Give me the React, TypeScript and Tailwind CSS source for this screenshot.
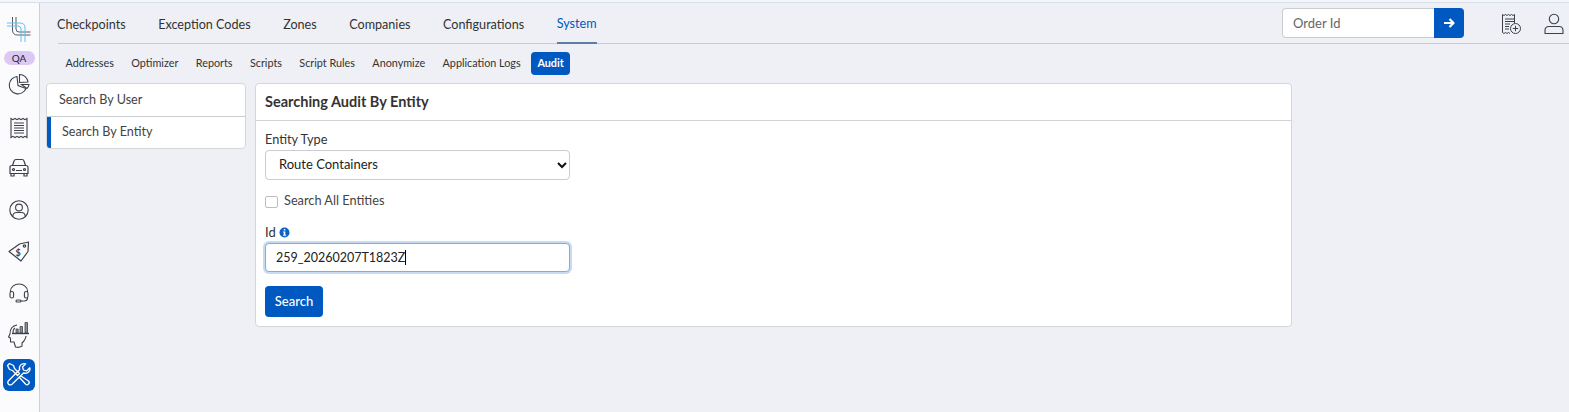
import React from "react";

const stroke = "#3c4149";

function Logo() {
  return (
    <svg width="24" height="25" viewBox="0 0 24 25" fill="none" strokeWidth="1">
      <path d="M5.500 0v13q0 5 5 5h13" stroke="#555a63" />
      <path d="M9 0v12q0 3 3 3h11.500" stroke="#555a63" />
      <path d="M0 6h13q5 0 5 5v14" stroke="#62c2ee" />
      <path d="M0 9h11q3 0 3 3v13" stroke="#62c2ee" />
    </svg>
  );
}
function Chart() {
  return (
    <svg width="22" height="22" viewBox="0 0 22 22" fill="none" stroke={stroke} strokeWidth="1.100">
      <path d="M9 3.500A8.700 8.700 0 1 0 18 15.500L10 12.500z" />
      <path d="M11.500 1.500a8.500 8.500 0 0 1 8.500 7.500l-8.500 .5z" />
      <path d="M13.500 11.500h7.500a8 8 0 0 1-2 4z" />
    </svg>
  );
}
function Receipt() {
  return (
    <svg width="20" height="22" viewBox="0 0 20 22" fill="none" stroke={stroke} strokeWidth="1.100">
      <path d="M2 1.500l2 1.200 2-1.200 2 1.200 2-1.200 2 1.200 2-1.200 2 1.200 2-1.200v19l-2-1.200-2 1.200-2-1.200-2 1.200-2-1.200-2 1.200-2-1.200-2 1.200z" />
      <path d="M5 6h10M5 8.500h10M5 11h10M5 13.500h10M5 16h10" />
    </svg>
  );
}
function Car() {
  return (
    <svg width="22" height="20" viewBox="0 0 22 20" fill="none" stroke={stroke} strokeWidth="1.200">
      <path d="M4.500 7.500l1.500-4.500q.4-1.500 2-1.500h6q1.600 0 2 1.500l1.500 4.500" />
      <path d="M2 9.500q0-2 2-2h14q2 0 2 2v6h-18z" />
      <path d="M3 15.500v2.500h3v-2.500M16 15.500v2.500h3v-2.500M8 12.500h6" />
      <circle cx="5.500" cy="11.500" r="1" />
      <circle cx="16.500" cy="11.500" r="1" />
    </svg>
  );
}
function UserCircle() {
  return (
    <svg width="20" height="20" viewBox="0 0 20 20" fill="none" stroke={stroke} strokeWidth="1.100">
      <circle cx="10" cy="10" r="9.200" />
      <circle cx="10" cy="7.500" r="3.400" />
      <path d="M3.800 16.500q0-4 4-4h4.400q4 0 4 4" />
    </svg>
  );
}
function Tag() {
  return (
    <svg width="22" height="22" viewBox="0 0 22 22" fill="none" stroke={stroke} strokeWidth="1.200">
      <path d="M1 11.500L11.500 4l9-2-.5 9.500-7 9.500z" strokeLinejoin="round" />
      <circle cx="16.500" cy="6" r="1.200" />
      <text x="7.500" y="15.500" fontSize="9" fontWeight="700" fill={stroke} stroke="none" fontFamily="Lato">$</text>
    </svg>
  );
}
function Headset() {
  return (
    <svg width="20" height="20" viewBox="0 0 20 20" fill="none" stroke={stroke} strokeWidth="1.100">
      <path d="M1.500 9V8a8.500 7 0 0 1 17 0v1" />
      <rect x="1" y="8.500" width="3.600" height="6.500" rx="1.800" />
      <rect x="15.400" y="8.500" width="3.600" height="6.500" rx="1.800" />
      <path d="M18.500 15q0 3-3.500 3h-3" />
      <rect x="7" y="17" width="5" height="2" rx="1" />
    </svg>
  );
}
function HeadChart() {
  return (
    <svg width="22" height="26" viewBox="0 0 22 26" fill="none" stroke={stroke} strokeWidth="1.100">
      <path d="M9 3Q2 4 2 12L.5 15l2 1v4H6l1.500 5q3.500 1 6.500-1v-3l2-2q2-3 2-5" strokeLinejoin="round" />
      <path d="M5 11q0-4 2-5" />
      <path d="M8 7h2.200v4H8zM12 4.500h2.500V11H12zM17 .5h2.500V11H17z" fill="#8a8e95" strokeWidth=".8" />
      <path d="M4 11.500h17" strokeWidth="1.400" />
    </svg>
  );
}
function Tools() {
  return (
    <svg width="26" height="26" viewBox="0 0 26 26" fill="none" stroke="#fff" strokeWidth="1.300" strokeLinejoin="round">
      <path d="M1.500 3.500L3.500 1.500l4 2 1 3 5 5-2 2-5-5-3-1z" />
      <path d="M15 14l-1.500 1.500 6 6.500q1.500 1.500 3 0t0-3z" />
      <path d="M23.800 5.800l-3.300 3.200-3-1-1-3L19.700 1.800q-4.200-1-5.700 2-1 1.700-.3 3.700L2.500 18.700q-1.500 2 0 3.500t3.500 0L17.500 11q2.500.7 4.500-.5 2.700-1.700 1.800-4.700z" />
    </svg>
  );
}
function ReceiptPlus() {
  return (
    <svg width="22" height="22" viewBox="0 0 22 22" fill="none" stroke={stroke} strokeWidth="1">
      <path d="M10 20.500l-1.500-1-1.500 1-1.500-1-1.500 1-1.500-1V1.500l1.500 1 1.500-1 1.500 1 1.500-1 1.500 1 1.500-1 1.500 1 1.500-1V10" />
      <path d="M5 6h10M5 8.500h10M5 11h5M5 13.500h4M5 16h4" />
      <circle cx="15.500" cy="15.500" r="5" />
      <path d="M15.500 12.800v5.400M12.800 15.500h5.400" />
    </svg>
  );
}
function UserOutline() {
  return (
    <svg width="20" height="22" viewBox="0 0 20 22" fill="none" stroke={stroke} strokeWidth="1.100">
      <circle cx="10" cy="6" r="4.700" />
      <path d="M1 20.500v-3q0-4 4-4h10q4 0 4 4v3z" strokeLinejoin="round" />
    </svg>
  );
}

const tabs = ["Checkpoints", "Exception Codes", "Zones", "Companies", "Configurations"];
const subs = ["Addresses", "Optimizer", "Reports", "Scripts", "Script Rules", "Anonymize", "Application Logs"];

export default function App() {
  return (
    <div className="flex h-[412px] w-[1569px] flex-col overflow-hidden bg-[#eef0f5] font-['Lato','Liberation_Sans',sans-serif] text-[#333]">
      <div className="h-[3px] shrink-0 border-b border-[#d8e0ea] bg-[#f4f6f9]" />
      <div className="flex min-h-0 flex-1">
        <aside className="flex w-[40px] shrink-0 flex-col items-center border-r border-[#cdd0d5] bg-[#fbfbfd] pr-[1px]">
          <div className="mt-[14px] flex h-[25px] items-center justify-center"><Logo /></div>
          <div className="mt-[9px] flex h-[14px] w-[31px] items-center justify-center rounded-full bg-[#dcc9f3] text-[10px] leading-none text-[#222]">QA</div>
          <div className="mt-[8px] flex h-[22px] items-center justify-center"><Chart /></div>
          <div className="mt-[22px] flex h-[22px] items-center justify-center"><Receipt /></div>
          <div className="mt-[19px] flex h-[20px] items-center justify-center"><Car /></div>
          <div className="mt-[22px] flex h-[20px] items-center justify-center"><UserCircle /></div>
          <div className="mt-[20px] flex h-[22px] items-center justify-center"><Tag /></div>
          <div className="mt-[21px] flex h-[20px] items-center justify-center"><Headset /></div>
          <div className="mt-[19px] flex h-[26px] items-center justify-center"><HeadChart /></div>
          <div className="mt-[11px] flex h-[32px] w-[32px] items-center justify-center rounded-[6px] bg-[#0059c1]"><Tools /></div>
        </aside>
        <main className="min-w-0 flex-1">
          <div className="ml-[18px] flex h-[41px] items-stretch border-b border-[#c9ccd1]">
            <nav className="-ml-[1px] flex items-stretch gap-[32.500px] text-[12.600px] text-[#333]">
              {tabs.map((t) => (
                <div key={t} className="flex items-center pt-[4px]">{t}</div>
              ))}
              <div className="-mb-[1px] flex items-center border-b-[2px] border-[#5f7ea6] pt-[4px] text-[#0059c1]">System</div>
            </nav>
            <div className="ml-auto flex items-start pt-[5px]">
              <div className="flex h-[30px] w-[182px]">
                <input readOnly placeholder="Order Id" className="h-full min-w-0 flex-1 rounded-l-[4px] border border-r-0 border-[#c9ccd1] bg-white pb-[1px] pl-[10px] text-[13px] text-[#333] outline-none placeholder:text-[#666]" />
                <div className="flex w-[30px] items-center justify-center rounded-r-[4px] bg-[#0059c1]">
                  <svg width="12" height="12" viewBox="0 0 12 12" fill="none" stroke="#fff" strokeWidth="2.200" strokeLinejoin="round">
                    <path d="M1 6h9M6.500 2l4 4-4 4" />
                  </svg>
                </div>
              </div>
              <div className="ml-[36px] mt-[5px]"><ReceiptPlus /></div>
              <div className="ml-[22px] mr-[5px] mt-[5px]"><UserOutline /></div>
            </div>
          </div>
          <div className="ml-[20px] flex h-[32px] items-center gap-[6.400px] pt-[6px] text-[10.800px] text-[#333]">
            {subs.map((s) => (
              <div key={s} className="flex h-[23px] items-center px-[5.500px]">{s}</div>
            ))}
            <div className="-ml-[1.500px] flex h-[23px] w-[39px] items-center justify-center rounded-[4px] bg-[#0059c1] font-bold text-white">Audit</div>
          </div>
          <div className="ml-[6px] mt-[7px] flex items-start gap-[9px]">
            <div className="w-[200px] overflow-hidden rounded-[4px] border border-[#d4d6da] bg-white text-[12.600px] text-[#444]">
              <div className="flex h-[33px] items-center border-b border-[#c9ccd1] pl-[12px]">Search By User</div>
              <div className="flex h-[31px] items-center border-l-[4px] border-[#0059c1] pl-[11px]">Search By Entity</div>
            </div>
            <div className="h-[244px] w-[1037px] rounded-[4px] border border-[#d4d6da] bg-white">
              <div className="flex h-[37px] items-center border-b border-[#d0d2d6] pl-[9px] text-[14.500px] font-bold text-[#333]">Searching Audit By Entity</div>
              <div className="pl-[9px] pt-[9px]">
                <label className="block h-[18px] text-[12.700px] leading-[18px] text-[#333]">Entity Type</label>
                <div className="relative mt-[2px] h-[30px] w-[305px]">
                  <select className="h-full w-full appearance-none rounded-[4px] border border-[#c9ccd1] bg-white pl-[13px] text-[13px] text-[#222] outline-none">
                    <option>Route Containers</option>
                  </select>
                  <svg className="pointer-events-none absolute right-[3px] top-[11px]" width="10" height="8" viewBox="0 0 10 8" fill="none" stroke="#111" strokeWidth="2">
                    <path d="M1 2l4 4 4-4" />
                  </svg>
                </div>
                <label className="mt-[12px] flex h-[18px] items-center text-[12.750px] text-[#444]">
                  <span className="mt-[2px] h-[12px] w-[13px] rounded-[2px] border border-[#bbbdc1] bg-white" />
                  <span className="ml-[6px]">Search All Entities</span>
                </label>
                <div className="mt-[14px] flex h-[17px] items-center text-[13px] text-[#333]">
                  <span>Id</span>
                  <svg className="ml-[3px]" width="11" height="11" viewBox="0 0 11 11">
                    <circle cx="5.500" cy="5.500" r="5" fill="#0b63c5" />
                    <rect x="4.800" y="2" width="1.500" height="1.500" fill="#fff" />
                    <path d="M4 4.500h2.300v3.200h.8v1H4v-1h.8V5.500H4z" fill="#fff" />
                  </svg>
                </div>
                <div className="relative mt-[2px] h-[29px] w-[305px]">
                  <input readOnly value="259_20260207T1823Z" className="h-full w-full rounded-[4px] border border-[#7eaee0] bg-white pl-[10px] text-[12.500px] text-[#222] shadow-[0_0_0_2px_#c7dbf2] outline-none" />
                  <span className="absolute left-[140px] top-[7px] h-[15px] w-px bg-black" />
                </div>
                <button className="mt-[14px] flex h-[31px] w-[58px] items-center justify-center rounded-[4px] bg-[#0059c1] text-[13px] font-medium text-white">Search</button>
              </div>
            </div>
          </div>
        </main>
      </div>
    </div>
  );
}
